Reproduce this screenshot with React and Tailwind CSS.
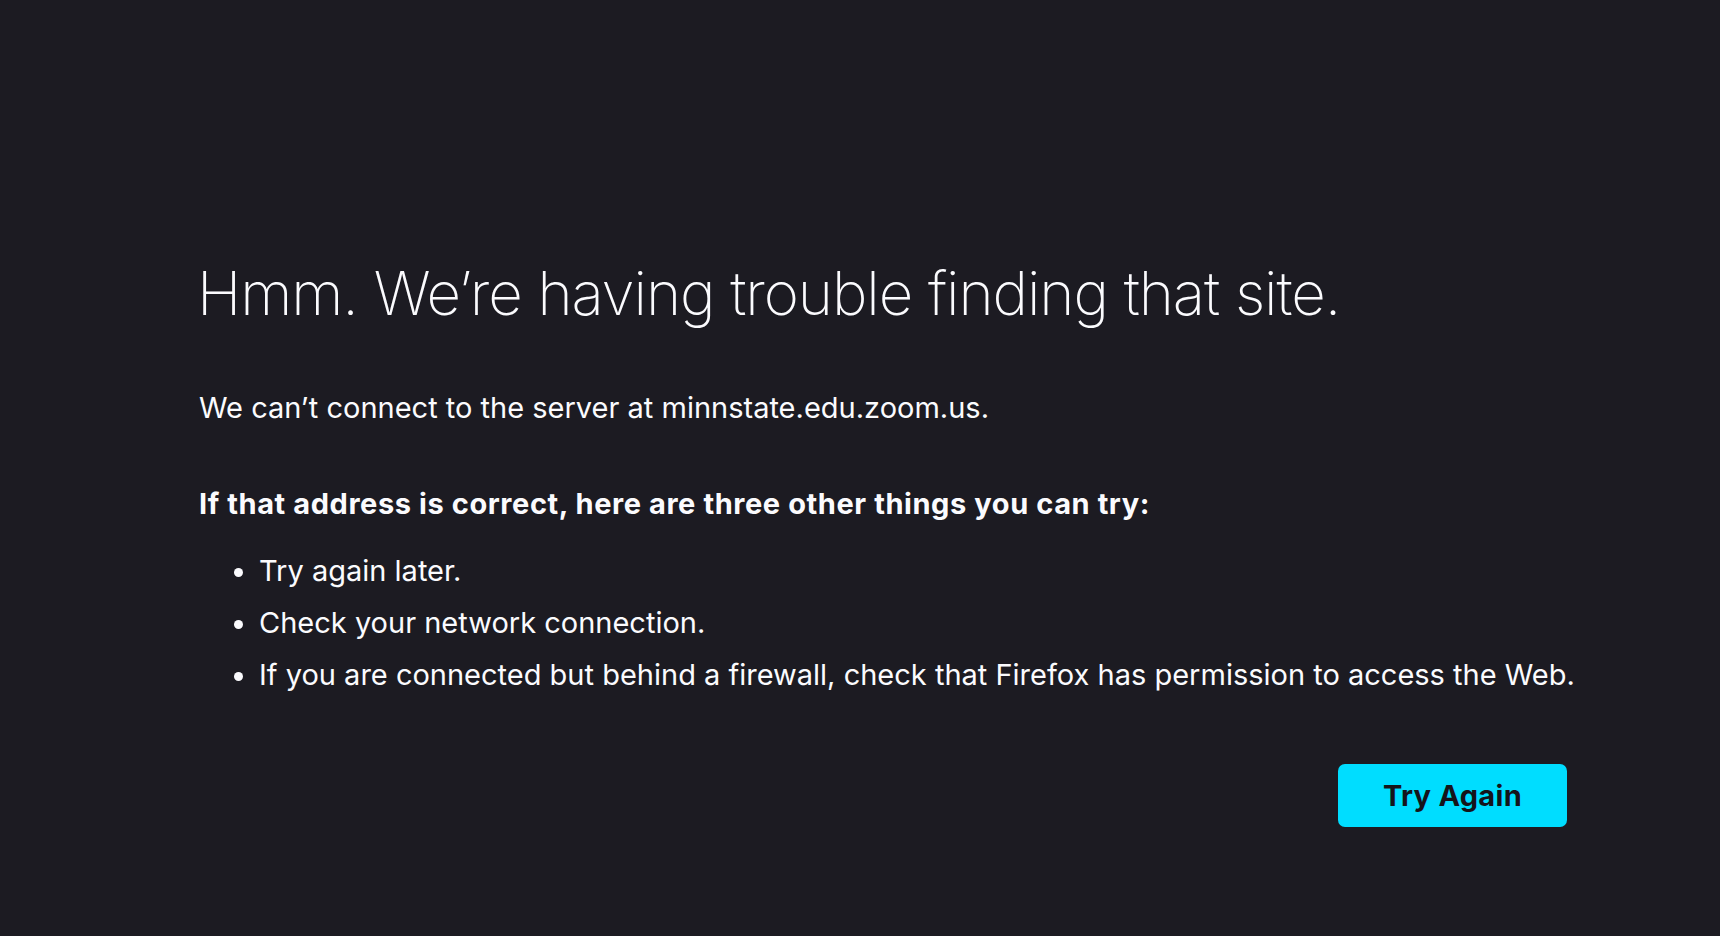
export default function App() {
  const tips = [
    'Try again later.',
    'Check your network connection.',
    'If you are connected but behind a firewall, check that Firefox has permission to access the Web.',
  ];

  return (
    <div className="min-h-screen bg-[#1c1b22] text-[#fbfbfe] font-['Inter','Liberation_Sans',sans-serif]">
      <div className="ml-[197px] w-[1370px] pt-[257px]">
        <h1 className="text-[60px] leading-[72px] font-extralight tracking-[-0.018em]">
          Hmm. We’re having trouble finding that site.
        </h1>

        <p className="mt-[53px] ml-[2px] text-[29px] leading-[52px]">
          We can’t connect to the server at minnstate.edu.zoom.us.
        </p>

        <p className="mt-[44px] ml-[2px] text-[29px] leading-[52px] font-bold tracking-[0.02em]">
          If that address is correct, here are three other things you can try:
        </p>

        <ul className="mt-[15px] list-disc pl-[62px] text-[29px] leading-[52px] whitespace-nowrap">
          {tips.map((tip) => (
            <li key={tip}>{tip}</li>
          ))}
        </ul>

        <div className="mt-[63px] flex justify-end">
          <button className="w-[229px] h-[63px] rounded-[7px] bg-[#00ddff] text-[#15141a] text-[29px] font-bold tracking-[0.01em]">
            Try Again
          </button>
        </div>
      </div>
    </div>
  );
}
